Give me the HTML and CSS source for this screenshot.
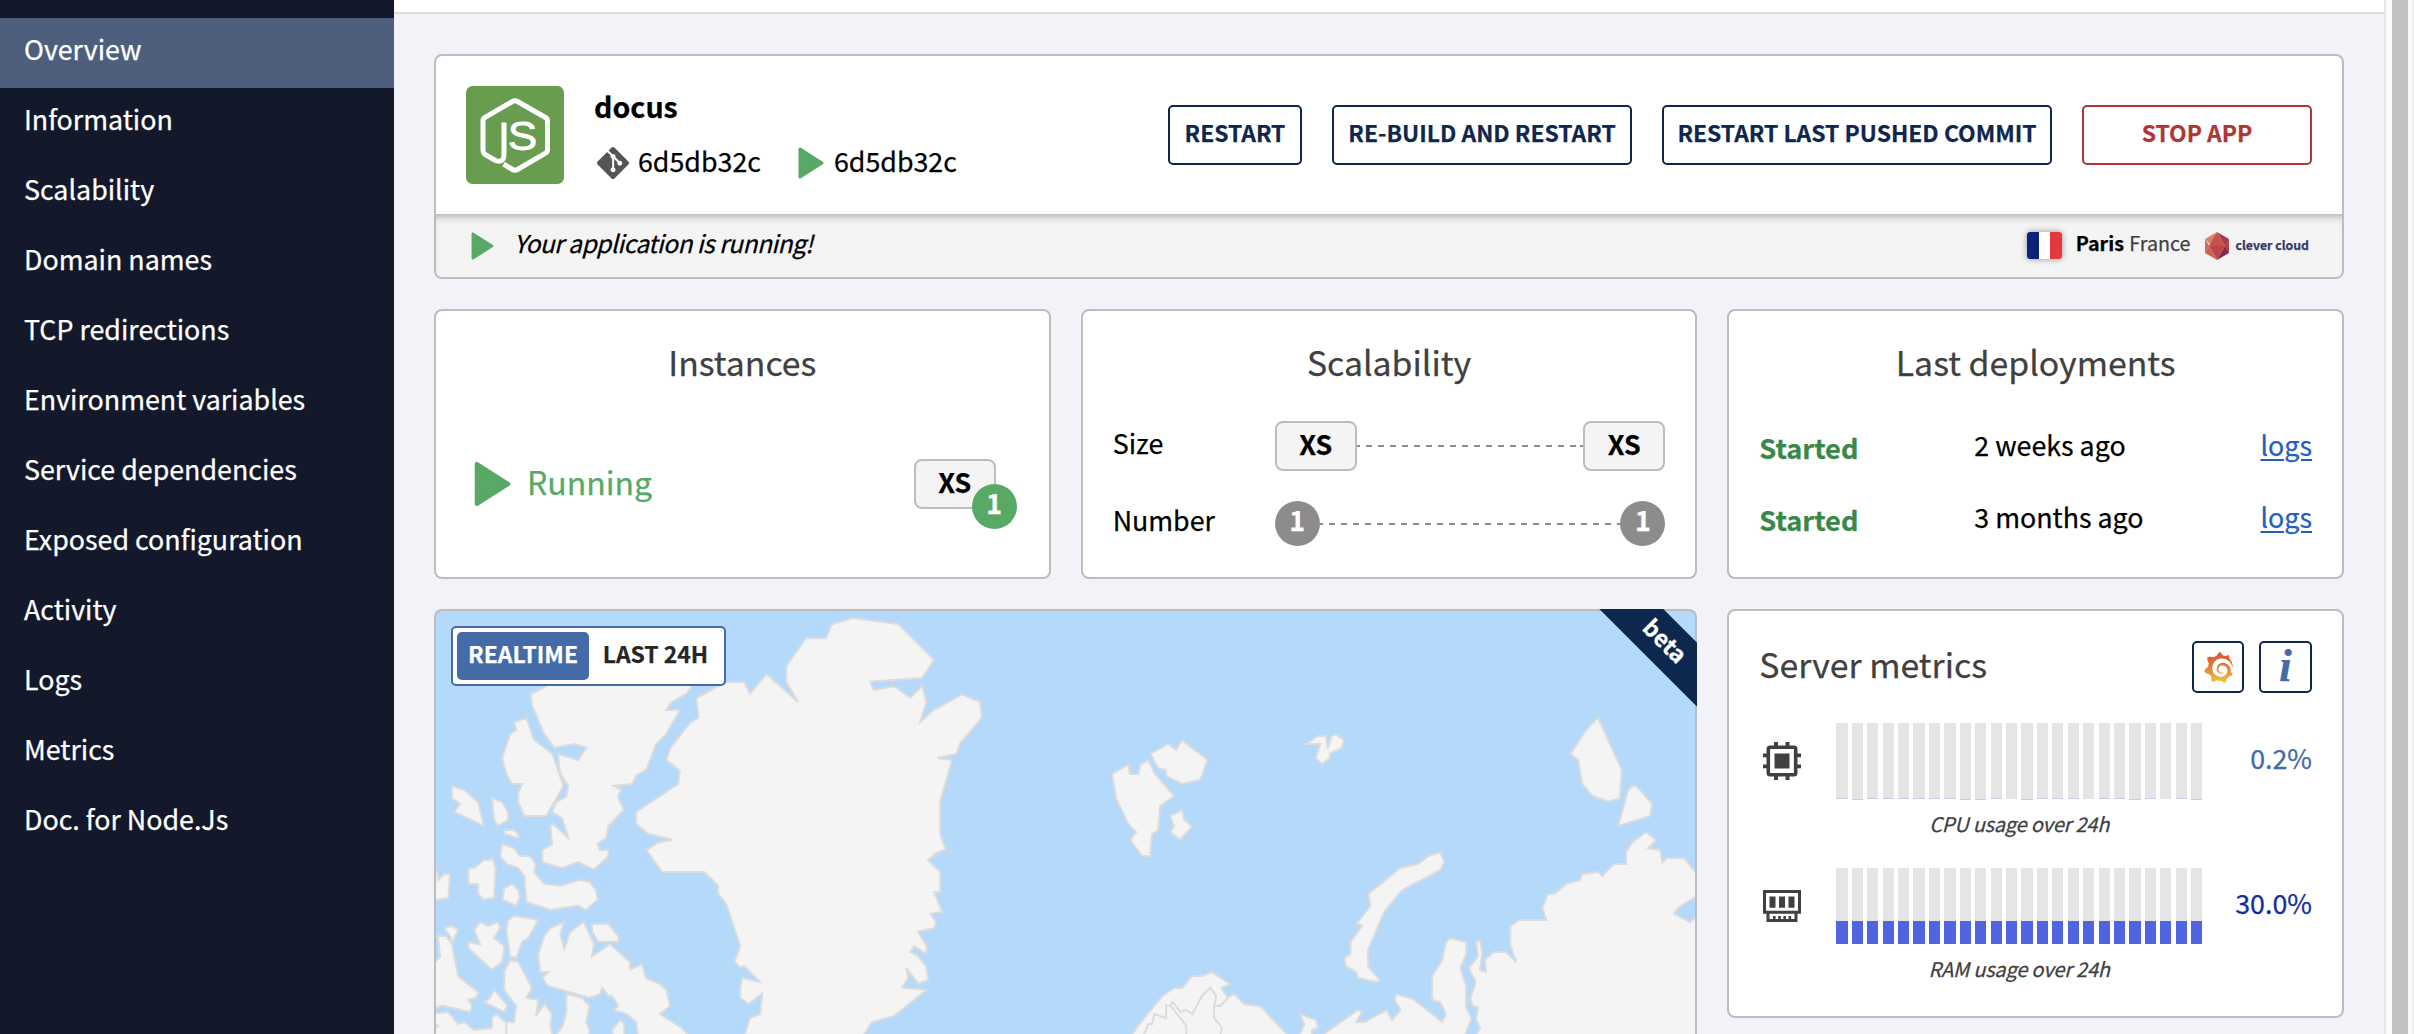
FILE: index.html
```html
<!DOCTYPE html>
<html lang="en">
<head>
<meta charset="utf-8">
<title>docus - Overview</title>
<link rel="stylesheet" href="styles.css">
</head>
<body>
<nav class="sidebar">
  <a class="nav-item active">Overview</a>
  <a class="nav-item">Information</a>
  <a class="nav-item">Scalability</a>
  <a class="nav-item">Domain names</a>
  <a class="nav-item">TCP redirections</a>
  <a class="nav-item">Environment variables</a>
  <a class="nav-item">Service dependencies</a>
  <a class="nav-item">Exposed configuration</a>
  <a class="nav-item">Activity</a>
  <a class="nav-item">Logs</a>
  <a class="nav-item">Metrics</a>
  <a class="nav-item">Doc. for Node.Js</a>
</nav>
<main class="main">
  <div class="topbar"></div>
  <div class="content">
    <section class="card header">
      <div class="header-top">
        <svg class="logo" viewBox="0 0 98 98">
          <rect width="98" height="98" rx="6.500" fill="#689d50"/>
          <path d="M38 36.500V68q0 9.500-8.500 6.500L20 69q-3-1.500-3-5V34.500q0-2 2-3.200L46.500 15.500q2.500-1.500 5 0L79.500 31.500q2 1.200 2 3.200V64q0 2-2 3.200L51.500 83.500q-2.500 1.500-5 0L37.500 78" fill="none" stroke="#fff" stroke-width="5"/>
          <text class="logo-letter" transform="translate(41.700 64) scale(1.080 1)">S</text>
        </svg>
        <div class="identity">
          <div class="app-name">docus</div>
          <div class="commits">
            <svg class="git" viewBox="0 0 24 24"><path fill="#555" d="M23.546 10.93L13.067.452c-.604-.603-1.582-.603-2.188 0L8.708 2.627l2.76 2.76c.645-.215 1.379-.07 1.889.441.516.515.658 1.258.438 1.9l2.658 2.66c.645-.223 1.387-.078 1.9.435.721.72.721 1.884 0 2.604-.719.719-1.881.719-2.6 0-.539-.541-.674-1.337-.404-1.996L12.86 8.955v6.525c.176.086.342.203.488.348.713.721.713 1.883 0 2.6-.719.721-1.889.721-2.609 0-.719-.719-.719-1.879 0-2.598.182-.18.387-.316.605-.406V8.835c-.217-.091-.424-.222-.6-.401-.545-.545-.676-1.342-.396-2.009L7.636 3.7.45 10.881c-.6.605-.6 1.584 0 2.189l10.48 10.477c.604.604 1.582.604 2.186 0l10.43-10.43c.605-.603.605-1.582 0-2.187"/></svg>
            <span class="hash">6d5db32c</span>
            <svg class="play play-commit" viewBox="0 0 26 32"><path d="M2 2v28L24 16z"/></svg>
            <span class="hash">6d5db32c</span>
          </div>
        </div>
        <div class="actions">
          <button class="btn w1">RESTART</button>
          <button class="btn w2">RE-BUILD AND RESTART</button>
          <button class="btn w3">RESTART LAST PUSHED COMMIT</button>
          <button class="btn danger w4">STOP APP</button>
        </div>
      </div>
      <div class="header-status">
        <svg class="play play-status" viewBox="0 0 26 32"><path d="M2 2v28L24 16z"/></svg>
        <em class="status-text">Your application is running!</em>
        <span class="flag"></span>
        <span class="zone"><b>Paris</b> <span class="country">France</span></span>
        <svg class="gem" viewBox="0 0 24 28">
          <path fill="#dd8468" d="M12 0L0 7l6 6.500z"/>
          <path fill="#c4524d" d="M12 0L4 14h16z"/>
          <path fill="#a63a4d" d="M12 0l12 7-4 7z"/>
          <path fill="#d36c5c" d="M0 7l4.500 7L0 21z"/>
          <path fill="#b84048" d="M24 7l-4.500 7 4.500 7z"/>
          <path fill="#c24346" d="M4 14h16l-8 14z"/>
          <path fill="#cf6157" d="M4 14l8 14L0 21z"/>
          <path fill="#822a4d" d="M20 14l4 7-12 7z"/>
        </svg>
        <span class="brand">clever cloud</span>
      </div>
    </section>

    <section class="card instances">
      <h2 class="title">Instances</h2>
      <div class="run-row">
        <svg class="play play-run" viewBox="0 0 26 32"><path d="M2 2v28L24 16z"/></svg>
        <span class="running">Running</span>
        <span class="size sized"><span>XS</span><span class="count green badge">1</span></span>
      </div>
    </section>

    <section class="card scal">
      <h2 class="title">Scalability</h2>
      <div class="scal-row r1"><span class="label">Size</span><span class="size"><span>XS</span></span><i class="dash"></i><span class="size"><span>XS</span></span></div>
      <div class="scal-row r2"><span class="label">Number</span><span class="count">1</span><i class="dash"></i><span class="count">1</span></div>
    </section>

    <section class="card deploys">
      <h2 class="title">Last deployments</h2>
      <div class="dep"><b>Started</b><span>2 weeks ago</span><a>logs</a></div>
      <div class="dep"><b>Started</b><span>3 months ago</span><a>logs</a></div>
    </section>

    <section class="card map">
      <svg class="world" viewBox="0 0 1260 423" preserveAspectRatio="xMinYMin slice">
        <g transform="translate(-6 -11) scale(.40816 .33333)">
          <path d="M285 258L247 283 250 316 279 400 304 443 353 432 383 443 363 480 313 462 319 520 339 558 334 590 309 606 299 636 324 655 339 714 302 672 295 678 299 733 275 750V787L324 804 363 786 402 809 437 768V750H416L411 731 432 713 437 678 475 630 460 588 470 570 450 558 496 552 505 527 530 509 554 432 579 401 613 330H579L592 306 628 282 642 258 642 220H285z"/>
          <path d="M725 246H770L784 282 824 222 902 306 873 246V198L921 115H970L985 73 1034 54 1147 72 1235 180 1206 234 1078 245 1088 270 1137 259 1177 293 1206 258 1216 306 1201 367 1233 331 1303 283 1348 306 1352 353 1299 430 1289 462 1243 474 1279 480 1250 605V703L1264 749 1245 756 1220 780 1250 816V876H1235L1255 936 1226 941 1240 966 1235 984 1196 995 1216 1037V1062L1186 1038 1177 1056 1196 1069 1216 1100 1220 1139 1196 1151 1166 1103 1172 1133 1157 1163 1216 1170 1137 1248 1083 1266 1050 1330H765L784 1254 809 1242 814 1181 780 1212 760 1194V1163L765 1133 809 1146 770 1098 760 1103 746 1085 760 1038 726 912 706 882V857L672 816H569L530 750 560 728 593 719 535 702 505 672V636L608 552 612 511 579 480 589 444 638 367 657 354 653 294z"/>
          <path d="M206 366L236 354 255 420 300 462 327 558 285 648H231L216 606V576L226 552H201L187 522 177 474 196 402 211 390z"/>
          <path d="M54 558L84 570 118 606 132 678 59 636 74 612 54 595z"/>
          <path d="M152 594L176 606 191 636V660L166 678 157 660z"/>
          <path d="M182 690H206L216 701V714L182 702z"/>
          <path d="M177 733L206 744 220 768H246L259 793 255 817 279 851 319 857 368 840 391 846 406 870 411 899 382 930 363 917 295 930 236 906 231 828 216 804 187 792 172 768z"/>
          <path d="M94 804H108L132 780H149L152 774 161 804 157 893 132 899 118 882V852H94z"/>
          <path d="M0 780L15 800 20 840 34 822H49L45 894 0 903z"/>
          <path d="M182 864L201 852 216 870 220 892 211 917 177 900z"/>
          <path d="M35 984L54 978 69 990 55 1026 50 1010z"/>
          <path d="M0 1008H39L54 1032 69 1129 118 1176 113 1194 94 1199 103 1217 98 1236 30 1217 0 1230V1100L25 1070 19 1010z"/>
          <path d="M108 990L123 966 142 978 167 966 172 984 157 1014 182 1039 177 1086 152 1109 94 1045V1026L123 1033z"/>
          <path d="M206 947L265 960 241 1014 226 1025 211 1074 196 1069 187 990 191 962z"/>
          <path d="M295 984L329 966 319 1003 329 1046 343 996 377 966 402 1032 397 1069 441 1032 490 1086V1109L519 1092 529 1134 562 1151 579 1170 588 1217 564 1242 615 1282 650 1330H512L505 1266 481 1242 450 1230 461 1217 446 1187H436L422 1163 417 1182 392 1194 290 1158 275 1134 290 1116H270L265 1062 280 1008z"/>
          <path d="M397 972H437L461 1008V1025H412L397 994z"/>
          <path d="M196 1080L216 1085 250 1163 236 1193 265 1199 260 1248 280 1212 299 1242 295 1278 303 1320H186V1266H206L211 1217 182 1170V1116z"/>
          <path d="M157 1169L190 1217 182 1236 133 1206 147 1194z"/>
          <path d="M334 1182L372 1194 391 1217 383 1266 391 1290 388 1320H300L325 1278 334 1236z"/>
          <path d="M0 1242L45 1236 69 1272 84 1266 108 1290 152 1284V1254L162 1242 187 1268V1330H0z"/>
          <path d="M466 1260L476 1272V1320H450L446 1290z"/>
          <path d="M0 1260L20 1278 0 1300z"/>
        </g>
        <g transform="translate(624 -11) scale(.42092 .33333)">
          <path d="M124 522L162 493 166 522H186L191 493 210 481 225 520 271 588 238 618 233 690 219 703 214 768H195L167 720 181 696 162 672 133 594z"/>
          <path d="M215 462L257 432 276 450 290 421 351 480 333 540 290 552 252 528V510L233 504z"/>
          <path d="M262 647L290 631 295 660 314 679 285 719 262 696 271 679z"/>
          <path d="M584 432L612 408H632L636 445 645 410 655 402 675 421 669 444 641 461V474L622 492 608 474 618 432z"/>
          <path d="M1278 353L1335 510 1330 595 1303 605 1265 588 1241 552 1231 480 1213 462 1250 390z"/>
          <path d="M1350 570L1359 558H1369L1407 611 1402 648 1326 678z"/>
          <path d="M904 757L913 786 904 810 813 870 770 936 732 1049V1099L760 1140 752 1146 708 1134 704 1116 680 1099 675 1075 690 1062V1026L718 977 704 972 737 918 733 882 809 804 851 792 875 768z"/>
          <path d="M1530 850L1483 774H1443L1431 787 1426 750 1397 744 1416 720 1392 696 1359 728 1345 756V792H1316L1288 828 1279 816 1241 822 1236 840 1203 852 1175 882H1159L1146 924 1155 960H1090L1070 978V1037L1084 1086 1060 1056H1030L1009 1080 1012 1116 998 1111 1003 1056 997 1020 989 1026 993 1069 971 1104 988 1146 975 1194 980 1218 993 1223 988 1259 998 1284 975 1340H1530V950L1508 954 1497 966 1459 942 1468 924 1508 892 1530 880z"/>
          <path d="M926 1014L965 1026V1062L951 1104 965 1158V1224L978 1254 955 1330H600L632 1297 708 1230 718 1235 704 1266H723L776 1230 789 1260 809 1230 795 1199 799 1182 841 1199 908 1266 917 1242 903 1206 884 1199V1128L908 1080 917 1026z"/>
          <path d="M170 1310L181 1284 243 1188 271 1164H290L314 1128H338L361 1116 403 1152 384 1164 398 1194 414 1182 437 1212 475 1218 560 1330H160z"/>
          <path d="M198 1310L209 1272H219L224 1242 252 1254V1217H262L300 1277V1330M262 1217L267 1206 286 1236 300 1230 314 1242 338 1187 357 1163 371 1188 366 1218V1254L385 1284 380 1310M366 1218H381L398 1194" fill="none"/>
          <path d="M570 1242L609 1260 613 1284 599 1290V1320H565L580 1272z"/>
        </g>
      </svg>
      <div class="toggle"><span class="on">REALTIME</span><span class="off">LAST 24H</span></div>
      <div class="ribbon"><span>beta</span></div>
    </section>

    <section class="card metrics">
      <div class="metrics-head">
        <h2 class="title">Server metrics</h2>
        <button class="icon-btn"><svg width="31" height="31" viewBox="0 0 24 24"><defs><linearGradient id="sun" x1="0" y1="0" x2="0" y2="1"><stop offset="0" stop-color="#dd5338"/><stop offset=".4" stop-color="#e37236"/><stop offset="1" stop-color="#f4c73e"/></linearGradient></defs><path fill="url(#sun)" d="M23.02 10.59a8.578 8.578 0 0 0-.862-3.034 8.911 8.911 0 0 0-1.789-2.445c.337-1.342-.413-2.505-.413-2.505-1.292-.08-2.113.4-2.416.62-.052-.02-.102-.044-.154-.064-.22-.089-.446-.172-.677-.247-.231-.073-.47-.14-.711-.197a9.867 9.867 0 0 0-.875-.161C14.557.753 12.94 0 12.94 0c-1.804 1.145-2.147 2.744-2.147 2.744l-.018.093c-.098.029-.2.057-.298.088-.138.042-.275.094-.413.143-.138.055-.275.107-.41.166a8.869 8.869 0 0 0-1.557.87l-.063-.029c-2.497-.955-4.716.195-4.716.195-.203 2.658.996 4.33 1.235 4.636a11.608 11.608 0 0 0-.607 2.635C1.636 12.677.953 15.014.953 15.014c1.926 2.214 4.171 2.351 4.171 2.351.003-.002.006-.002.006-.005.285.509.615.994.986 1.446.156.19.32.371.488.548-.704 2.009.099 3.68.099 3.68 2.144.08 3.553-.937 3.849-1.173a9.784 9.784 0 0 0 3.164.501h.08l.055-.003.107-.002.103-.005.003.002c1.01 1.44 2.788 1.646 2.788 1.646 1.264-1.332 1.337-2.653 1.337-2.94v-.058c0-.02-.003-.039-.003-.06.265-.187.52-.387.758-.6a7.875 7.875 0 0 0 1.415-1.7c1.43.083 2.437-.885 2.437-.885-.236-1.49-1.085-2.216-1.264-2.354l-.018-.013-.016-.013a.217.217 0 0 1-.031-.02c.008-.092.016-.18.02-.27.011-.162.016-.323.016-.48v-.253l-.005-.098-.008-.135a1.891 1.891 0 0 0-.01-.13c-.003-.042-.008-.083-.013-.125l-.016-.124-.018-.122a6.215 6.215 0 0 0-2.032-3.73 6.015 6.015 0 0 0-3.222-1.46 6.292 6.292 0 0 0-.85-.048l-.107.002h-.063l-.044.003-.104.008a4.777 4.777 0 0 0-3.335 1.695c-.332.4-.592.84-.768 1.297a4.594 4.594 0 0 0-.312 1.817l.003.091c.005.055.007.11.013.164a3.615 3.615 0 0 0 .698 1.82 3.53 3.53 0 0 0 1.827 1.282c.33.098.66.14.971.137.039 0 .078 0 .114-.002l.063-.003c.02 0 .041-.003.062-.003.034-.002.065-.007.099-.01.007 0 .018-.003.028-.003l.031-.005.06-.008a1.18 1.18 0 0 0 .112-.02c.036-.008.072-.013.109-.024a2.634 2.634 0 0 0 .914-.415c.028-.02.056-.041.085-.065a.248.248 0 0 0 .039-.35.244.244 0 0 0-.309-.06l-.078.042c-.09.044-.184.083-.283.116a2.476 2.476 0 0 1-.475.096c-.028.003-.054.006-.083.006l-.083.002c-.026 0-.054 0-.08-.002l-.102-.006h-.012l-.024.006c-.016-.003-.031-.003-.044-.006-.031-.002-.06-.007-.091-.01a2.59 2.59 0 0 1-.724-.213 2.557 2.557 0 0 1-.667-.438 2.52 2.52 0 0 1-.805-1.475 2.306 2.306 0 0 1-.029-.444l.006-.122v-.023l.002-.031c.003-.021.003-.04.005-.06a3.163 3.163 0 0 1 1.352-2.29 3.12 3.12 0 0 1 .937-.43 2.946 2.946 0 0 1 .776-.101h.06l.07.002.045.003h.026l.07.005a4.041 4.041 0 0 1 1.635.49 3.94 3.94 0 0 1 1.602 1.662 3.77 3.77 0 0 1 .397 1.414l.005.076.003.075c.002.026.002.05.002.075 0 .024.003.052 0 .07v.065l-.002.073-.008.174a6.195 6.195 0 0 1-.08.639 5.1 5.1 0 0 1-.267.927 5.31 5.31 0 0 1-.624 1.13 5.052 5.052 0 0 1-3.237 2.014 4.82 4.82 0 0 1-.649.066l-.039.003h-.287a6.607 6.607 0 0 1-1.716-.265 6.776 6.776 0 0 1-3.4-2.274 6.75 6.75 0 0 1-.746-1.15 6.616 6.616 0 0 1-.714-2.596l-.005-.083-.002-.02v-.056l-.003-.073v-.096l-.003-.104v-.07l.003-.163c.008-.22.026-.45.054-.678a8.707 8.707 0 0 1 .28-1.355c.128-.444.286-.872.473-1.277a7.04 7.04 0 0 1 1.456-2.1 5.925 5.925 0 0 1 .953-.763c.169-.111.343-.213.524-.306.089-.05.182-.091.273-.135.047-.02.093-.042.138-.062a7.177 7.177 0 0 1 .714-.267l.145-.045c.049-.015.098-.026.148-.041.098-.029.197-.052.296-.076.049-.013.1-.02.15-.033l.15-.032.151-.028.076-.013.075-.01.153-.024c.057-.01.114-.013.171-.023l.169-.021c.036-.003.073-.008.106-.01l.073-.008.036-.003.042-.002c.057-.003.114-.008.171-.01l.086-.006h.023l.037-.003.145-.007a7.999 7.999 0 0 1 1.708.125 7.917 7.917 0 0 1 2.048.68 8.253 8.253 0 0 1 1.672 1.09l.09.077.089.078c.06.052.114.107.171.159.057.052.112.106.166.16.052.055.107.107.159.164a8.671 8.671 0 0 1 1.41 1.978c.012.026.028.052.04.078l.04.078.075.156c.023.051.05.1.07.153l.065.15a8.848 8.848 0 0 1 .45 1.34.19.19 0 0 0 .201.142.186.186 0 0 0 .172-.184c.01-.246.002-.532-.024-.856z"/></svg></button>
        <button class="icon-btn info">i</button>
      </div>
      <div class="metric">
        <svg class="metric-icon" viewBox="0 0 38 38"><path fill="none" stroke="#404040" stroke-width="3.600" d="M7 5.300h24q1.700 0 1.700 1.700v24q0 1.700-1.700 1.700H7Q5.300 32.700 5.300 31V7Q5.300 5.300 7 5.300z"/><path fill="#404040" d="M11.500 11.500h15v15h-15zM11 0h4v5h-4zM22.500 0h4v5h-4zM11 33h4v5h-4zM22.500 33h4v5h-4zM0 11.500h5v3.800H0zM0 22.500h5v3.800H0zM33 11.500h5v3.800h-5zM33 22.500h5v3.800h-5z"/></svg>
        <div class="bars cpu"></div>
        <span class="value cpu-val">0.2%</span>
      </div>
      <div class="caption">CPU usage over 24h</div>
      <div class="metric">
        <svg class="metric-icon" viewBox="0 0 38 38"><g transform="translate(0 3)"><path fill="none" stroke="#404040" stroke-width="3" d="M1.500 1.500h35v20.700h-35zM5 23v7.500h28V23"/><path fill="#404040" d="M6.500 6.500h6v11.200h-6zM16 6.500h6v11.200h-6zM25.500 6.500h6v11.200h-6zM10 26h2.600v4H10zM15.200 26h2.600v4h-2.600zM20.400 26H23v4h-2.600zM25.600 26h2.600v4h-2.600z"/></g></svg>
        <div class="bars ram"></div>
        <span class="value ram-val">30.0%</span>
      </div>
      <div class="caption">RAM usage over 24h</div>
    </section>
  </div>
</main>
<div class="scrollbar"><div class="thumb"></div></div>
<script src="bars.js"></script>
</body>
</html>
```
FILE: bars.js
```js
// Hourly usage, in percent of the bar height.
const usage = {
  cpu: [1, .5, .8, 1.500, .7, .7, .7, 1.200, .6, .6, 1, 0, .6, .7, 1.200, .7, 0, .7, 1.800, .6, 1, 0, .9, .6],
  ram: Array(24).fill(30)
};
for (const [name, values] of Object.entries(usage)) {
  const box = document.querySelector('.bars.' + name);
  for (const v of values) {
    const bar = document.createElement('div');
    bar.className = 'bar';
    const fill = document.createElement('div');
    fill.className = 'fill';
    fill.style.height = v + '%';
    bar.append(fill);
    box.append(bar);
  }
}
```
FILE: styles.css
```css
* { box-sizing: border-box; }
html, body { height: 100%; margin: 0; overflow: hidden; }
body {
  display: flex;
  background: #f2f3f9;
  font-family: "Noto Sans CJK SC", "Noto Sans", sans-serif;
  font-size: 26.8px;
  line-height: 40px;
  color: #000;
  white-space: nowrap;
  -webkit-text-stroke: .25px;
}
button { font-family: inherit; margin: 0; background: #fff; }
svg { display: block; flex: none; overflow: visible; }

.sidebar { flex: none; width: 394px; padding-top: 18px; background: #13182b; }
.nav-item { display: block; height: 70px; padding: 11px 24px 0; color: #fff; line-height: 40px; }
.nav-item.active { background: #4d5f7d; }

.main { flex: 1; min-width: 0; display: flex; flex-direction: column; }
.topbar { flex: none; height: 14px; background: #fff; border-bottom: 2px solid #dcdcdf; }
.content {
  display: grid;
  grid-template-columns: repeat(3, minmax(0, 1fr));
  grid-template-rows: 225px 270px 425px;
  gap: 30px;
  padding: 40px 40px 0;
}
.scrollbar { flex: none; width: 30px; background: #fafafa; border-left: 2px solid #e6e6e8; border-right: 2px solid #ededed; padding-left: 6px; }
.thumb { width: 16px; height: 100%; background: #c2c2c2; }

.card { position: relative; background: #fff; border: 2px solid #bcbdbf; border-radius: 8px; }
.title { margin: 0; font-weight: 400; font-size: 33.800px; line-height: 50px; color: #404040; text-align: center; }
.play { fill: #58a966; stroke: #58a966; stroke-width: 3; stroke-linejoin: round; }

.header { grid-column: span 3; display: flex; flex-direction: column; }
.header-top { height: 158px; display: flex; align-items: center; padding: 0 30px; }
.logo { width: 98px; height: 98px; }
.logo-letter { font: 41px "Liberation Sans", sans-serif; fill: #fff; stroke: #fff; stroke-width: .8px; }
.identity { margin-left: 30px; padding-bottom: 4px; }
.app-name { font-weight: 700; font-size: 28.600px; line-height: 54px; }
.commits { display: flex; align-items: center; height: 54px; }
.hash { margin-top: 2px; }
.git { width: 32px; height: 32px; margin: 6px 9px 0 3px; }
.play-commit { width: 28px; height: 32px; margin: 6px 9px 0 36px; }
.actions { display: flex; gap: 30px; margin-left: auto; }
.btn { height: 60px; padding: 0 0 5px; border: 2px solid #0e274e; border-radius: 5px; color: #0e274e; font-size: 22.900px; font-weight: 700; line-height: 51px; }
.btn.danger { color: #b03535; border-color: #b03535; }
.w1 { width: 134px; }
.w2 { width: 300px; }
.w3 { width: 390px; }
.w4 { width: 230px; }
.header-status { flex: 1; display: flex; align-items: center; padding: 0 33px 0 34px; background: #f4f4f4; border-radius: 0 0 6px 6px; box-shadow: inset 0 8px 8px -6px rgba(0,0,0,.32); }
.play-status { width: 25px; height: 28px; }
.status-text { margin: -6px auto 0 19px; font-size: 24.500px; letter-spacing: -.5px; }
.flag { width: 35px; height: 27px; border-radius: 3px; background: linear-gradient(90deg, #0b2279 33.3%, #fff 33.3% 66.6%, #e2383e 66.6%); box-shadow: 0 0 6px rgba(0,0,0,.4); }
.zone { margin: -5px 0 0 14px; font-size: 19.700px; word-spacing: 1px; }
.country { color: #404040; }
.gem { width: 24px; height: 28px; margin-left: 15px; }
.brand { margin: -2px 0 0 6px; font: 700 12.300px/20px "Noto Sans CJK SC", sans-serif; color: #3a3769; }

.card > .title { padding-top: 26px; }
.run-row { display: flex; align-items: center; height: 50px; margin: 72px 53px 0 38px; }
.play-run { width: 37px; height: 46px; }
.running { margin: -6px auto 0 16px; font-size: 32px; color: #58a966; }
.size { position: relative; display: flex; justify-content: center; width: 82px; height: 50px; border: 2px solid #bcbdbf; border-radius: 8px; background: #f4f4f4; font-weight: 700; line-height: 41px; }
.count { width: 45px; height: 45px; border-radius: 50%; background: #8c8c8c; color: #fff; font-weight: 700; line-height: 37px; text-align: center; }
.green { background: #58a966; }
.badge { position: absolute; left: 56px; top: 23px; }
.scal-row { display: flex; align-items: center; margin: 0 30px; }
.r1 { height: 50px; margin-top: 34px; }
.r2 { height: 45px; margin-top: 30px; }
.label { width: 162px; margin-top: -7px; }
.dash { flex: 1; height: 2px; background: repeating-linear-gradient(90deg, #8c8c8c 0 6px, transparent 6px 12px); background-position-x: -3px; }
.deploys .title { margin-bottom: 38px; }
.dep { display: flex; height: 72px; margin: 0 30px; line-height: 40px; }
.dep b { width: 215px; color: #3a8849; padding-top: 2px; font-size: 27.200px; }
.dep a { margin-left: auto; color: #2560bf; text-decoration: underline; text-decoration-thickness: 2px; text-underline-offset: 3px; }

.map { grid-column: span 2; background: #b4d9fb; border-bottom: 0; border-radius: 8px 8px 0 0; }
.world { width: 100%; height: 423px; overflow: hidden; border-radius: 6px 6px 0 0; }
.world path { fill: #f4f4f4; stroke: #dcdcdc; stroke-width: 2px; vector-effect: non-scaling-stroke; }
.world path[fill="none"] { fill: none; }
.toggle { position: absolute; left: 15px; top: 15px; display: flex; width: 275px; height: 60px; padding: 4px; border: 2px solid #446aa8; border-radius: 5px; background: #fff; font-size: 22.900px; font-weight: 700; line-height: 43px; text-align: center; }
.on { width: 132px; background: #446aa8; color: #fff; border-radius: 5px; }
.off { flex: 1; padding-left: 2px; color: #262626; }
.ribbon { position: absolute; right: -2px; top: -2px; width: 98px; height: 98px; clip-path: polygon(0 0, 64px 0, 98px 34px, 98px 98px); background: #0e274e; }
.ribbon span { position: absolute; left: 37px; top: 11px; width: 60px; text-align: center; transform: rotate(45deg); color: #fff; font-size: 23px; font-weight: 700; line-height: 40px; }

.metrics { height: 409px; padding: 30px; }
.metrics-head { display: flex; height: 52px; gap: 15px; }
.metrics-head .title { margin-right: auto; line-height: 45px; }
.icon-btn { display: flex; align-items: center; justify-content: center; width: 52px; height: 52px; padding: 0; border: 2px solid #0e274e; border-radius: 5px; }
.info { width: 53px; font: italic 700 46px/44px "Liberation Serif", serif; color: #446aa8; padding-bottom: 3px; }
.metric { display: flex; align-items: center; height: 76px; margin-top: 30px; }
.metric-icon { width: 38px; height: 38px; margin: 0 35px 0 4px; }
.bars { display: flex; gap: 4.200px; width: 366px; height: 76px; }
.bar { flex: 1; display: flex; align-items: flex-end; background: #e5e5e5; }
.fill { width: 100%; background: #5163e0; }
.cpu .fill { background: #c3cfe6; }
.value { margin: -6px 0 0 auto; }
.cpu-val { color: #446aa8; }
.ram-val { color: #122e9c; }
.caption { height: 39px; text-align: center; color: #404040; font-style: italic; font-size: 20px; line-height: 50px; letter-spacing: -.2px; padding-right: 33px; }
```
